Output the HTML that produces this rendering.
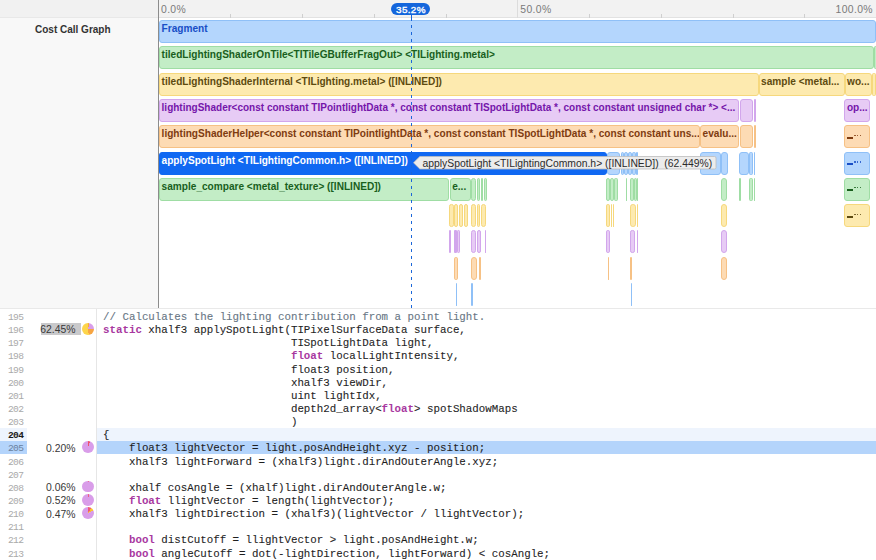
<!DOCTYPE html>
<html><head><meta charset="utf-8">
<style>
*{margin:0;padding:0;box-sizing:border-box}
body{--bl:#8fc0f7;--gr:#9fdda4;--ye:#f6d87d;--pu:#d2a6ec;--or:#f6c185}
html,body{width:876px;height:560px;overflow:hidden;background:#fff;font-family:"Liberation Sans",sans-serif}
.a{position:absolute}
#left{left:0;top:0;width:158px;height:308px;background:#f8f8f8}
#lefttop{left:0;top:0;width:158px;height:17.5px;background:#f1f1f1}
#lefthdr{left:0;top:17px;width:158px;height:1px;background:#e8e8e8}
#vdiv{left:158px;top:0;width:1px;height:308px;background:#8c8c8c}
#hdr{left:159px;top:0;width:717px;height:18px;background:#f2f2f2;border-bottom:1px solid #e2e2e2}
#graph{left:159px;top:18px;width:717px;height:290px;background:#fff}
.title{left:35px;top:23.5px;font-size:10px;font-weight:bold;color:#333}
.pct{top:3.5px;font-size:10.4px;letter-spacing:0.35px;color:#7a7a7a}
.tick{top:14px;width:1px;height:3.5px;background:#cfcfcf}
.b{position:absolute;height:23px;border-radius:3px;border:1px solid;font-size:10.1px;font-weight:bold;line-height:15px;padding-left:1.6px;white-space:nowrap;overflow:hidden}
.bl{background:#b4d6fd;border-color:#8fc0f7;color:#184ec6}
.gr{background:#c3edc6;border-color:#9fdda4;color:#195f1d}
.ye{background:#fdeaaf;border-color:#f6d87d;color:#5d4a10}
.pu{background:#e7cbf5;border-color:#d2a6ec;color:#7516aa}
.or{background:#fddbb4;border-color:#f6c185;color:#7f3c10}
.us{position:absolute;left:2px;width:6px;height:1.8px;background:currentColor}
.dt{position:absolute;width:1.5px;height:1.5px;background:currentColor;opacity:.8}
.sel{background:#1068f2;border-color:#1068f2;color:#fff}
#dash{left:410.7px;top:24.6px;width:1.5px;height:283px;background:repeating-linear-gradient(to bottom,#1a66d9 0,#1a66d9 3.4px,transparent 3.4px,transparent 7px)}
#dashtop{left:410.7px;top:14px;width:1.5px;height:6.6px;background:#1a66d9}
#pill{left:391.3px;top:2.7px;width:39px;height:12.3px;border-radius:7px;background:#1466dc;color:#fff;font-size:9.9px;font-weight:normal;-webkit-text-stroke:0.35px #fff;letter-spacing:0.35px;text-align:center;line-height:13px;text-indent:0.3px}
#tip{left:413px;top:156.3px;width:303.5px;height:13.5px}
#tiptext{left:422.5px;top:156.5px;font-size:10.36px;color:#2b2b2b;line-height:13px;white-space:pre}
#code{left:0;top:308px;width:876px;height:252px;background:#fff;border-top:1px solid #e9e9e9}
#gsep{left:96px;top:309px;width:1px;height:251px;background:#e6e6e6}
.hl204{left:0;width:27px;background:#eef4fd;height:13.15px}
.hl204c{left:97px;width:779px;background:#eef4fd;height:13.15px}
.hl205{left:0;width:27px;background:#b4d4fb;height:13.15px}
.hl205c{left:97px;width:779px;background:#b4d4fb;height:13.15px}
.ln{position:absolute;left:0;width:23.2px;text-align:right;font-family:"Liberation Mono",monospace;font-size:9.6px;letter-spacing:-0.7px;color:#a9a9a9;height:13.15px;line-height:13.15px}
.ln.cur{color:#1a1a1a;font-weight:bold}
.ln.sl{color:#6a819e}
.cl{position:absolute;left:103px;font-family:"Liberation Mono",monospace;font-size:10.8px;color:#1f1f1f;white-space:pre;height:13.15px;line-height:13.15px;-webkit-text-stroke:0.1px currentColor}
.kw{color:#a8389f;font-weight:bold;-webkit-text-stroke:0}
.cm{color:#687684}
.pc{position:absolute;right:800.5px;font-size:10.4px;color:#383838;margin-top:-0.6px;height:13.15px;line-height:13.15px}
.pie{position:absolute;left:82.1px;width:11.8px;height:11.8px;border-radius:50%}
</style></head><body>
<div class="a" id="left"></div>
<div class="a" id="lefttop"></div>
<div class="a" id="lefthdr"></div>
<div class="a title">Cost Call Graph</div>
<div class="a" id="hdr"></div>
<div class="a" id="graph"></div>
<div class="a" id="vdiv"></div>
<div class="a tick" style="left:230.4px"></div><div class="a tick" style="left:302.1px"></div><div class="a tick" style="left:373.9px"></div><div class="a tick" style="left:445.6px"></div><div class="a tick" style="left:589.2px"></div><div class="a tick" style="left:660.9px"></div><div class="a tick" style="left:732.7px"></div><div class="a tick" style="left:804.4px"></div><div class="a" style="left:517px;top:0;width:1px;height:18px;background:#dcdcdc"></div>
<div class="a pct" style="left:161px">0.0%</div>
<div class="a pct" style="left:520.3px">50.0%</div>
<div class="a pct" style="left:835.6px">100.0%</div>
<div class="b bl" style="left:159.0px;top:20.0px;width:717.0px;">Fragment</div>
<div class="b gr" style="left:159.0px;top:46.3px;width:714.5px;">tiledLightingShaderOnTile&lt;TITileGBufferFragOut&gt; &lt;TILighting.metal&gt;</div>
<div class="b gr" style="left:874.3px;top:46.3px;width:2.7px;border-radius:1.4px;"></div>
<div class="b ye" style="left:159.0px;top:72.6px;width:599.5px;">tiledLightingShaderInternal &lt;TILighting.metal&gt; ([INLINED])</div>
<div class="b ye" style="left:758.5px;top:72.6px;width:86.0px;">sample &lt;metal...</div>
<div class="b ye" style="left:844.5px;top:72.6px;width:27.0px;">wo...</div>
<div class="b ye" style="left:872.0px;top:72.6px;width:3.0px;border-radius:1.5px;"></div>
<div class="b pu" style="left:159.0px;top:98.9px;width:580.3px;"><span style="font-size:10px">lightingShader&lt;const constant TIPointlightData *, const constant TISpotLightData *, const constant unsigned char *&gt; &lt;...</span></div>
<div class="b pu" style="left:739.6px;top:98.9px;width:13.9px;"></div>
<div class="b pu" style="left:753.8px;top:98.9px;width:2.2px;border-radius:1px;border:none;background:var(--pu);"></div>
<div class="b pu" style="left:844.3px;top:98.9px;width:25.7px;">op...</div>
<div class="b or" style="left:159.0px;top:125.2px;width:540.6px;">lightingShaderHelper&lt;const constant TIPointlightData *, const constant TISpotLightData *, const constant uns...</div>
<div class="b or" style="left:700.0px;top:125.2px;width:39.3px;">evalu...</div>
<div class="b or" style="left:739.6px;top:125.2px;width:13.9px;"></div>
<div class="b or" style="left:753.8px;top:125.2px;width:2.2px;border-radius:1px;border:none;background:var(--or);"></div>
<div class="b or" style="left:844.3px;top:125.2px;width:25.7px;"><i class="us" style="top:10.80px"></i><i class="dt" style="left:9px;top:8.80px"></i><i class="dt" style="left:11.7px;top:8.80px"></i><i class="dt" style="left:14.4px;top:8.80px"></i></div>
<div class="b sel" style="left:159.0px;top:151.5px;width:448.0px;">applySpotLight &lt;TILightingCommon.h&gt; ([INLINED])</div>
<div class="b bl" style="left:607.0px;top:151.5px;width:13.3px;"></div>
<div class="b bl" style="left:620.5px;top:151.5px;width:3.5px;border-radius:1.8px;"></div>
<div class="b bl" style="left:624.3px;top:151.5px;width:3.7px;border-radius:1.9px;"></div>
<div class="b bl" style="left:628.3px;top:151.5px;width:3.7px;border-radius:1.9px;"></div>
<div class="b bl" style="left:632.3px;top:151.5px;width:3.2px;border-radius:1.6px;"></div>
<div class="b bl" style="left:635.8px;top:151.5px;width:2.2px;border-radius:1px;border:none;background:var(--bl);"></div>
<div class="b bl" style="left:700.2px;top:151.5px;width:20.4px;"></div>
<div class="b bl" style="left:721.0px;top:151.5px;width:6.5px;"></div>
<div class="b bl" style="left:739.2px;top:151.5px;width:9.4px;"></div>
<div class="b bl" style="left:749.0px;top:151.5px;width:3.0px;border-radius:1.5px;"></div>
<div class="b bl" style="left:753.6px;top:151.5px;width:1.9px;border-radius:1px;border:none;background:var(--bl);"></div>
<div class="b bl" style="left:844.3px;top:151.5px;width:25.7px;"><i class="us" style="top:10.50px"></i><i class="dt" style="left:9px;top:8.50px"></i><i class="dt" style="left:11.7px;top:8.50px"></i><i class="dt" style="left:14.4px;top:8.50px"></i></div>
<div class="b gr" style="left:159.0px;top:177.8px;width:290.3px;">sample_compare &lt;metal_texture&gt; ([INLINED])</div>
<div class="b gr" style="left:449.6px;top:177.8px;width:21.2px;">e...</div>
<div class="b gr" style="left:471.2px;top:177.8px;width:5.3px;border-radius:2.7px;"></div>
<div class="b gr" style="left:476.8px;top:177.8px;width:3.7px;border-radius:1.8px;"></div>
<div class="b gr" style="left:480.8px;top:177.8px;width:2.5px;border-radius:1px;border:none;background:var(--gr);"></div>
<div class="b gr" style="left:483.5px;top:177.8px;width:2.8px;border-radius:1.4px;"></div>
<div class="b gr" style="left:606.0px;top:177.8px;width:4.0px;border-radius:2.0px;"></div>
<div class="b gr" style="left:610.3px;top:177.8px;width:3.7px;border-radius:1.9px;"></div>
<div class="b gr" style="left:614.3px;top:177.8px;width:3.0px;border-radius:1.5px;"></div>
<div class="b gr" style="left:625.6px;top:177.8px;width:1.4px;border-radius:1px;border:none;background:var(--gr);"></div>
<div class="b gr" style="left:630.0px;top:177.8px;width:3.5px;border-radius:1.8px;"></div>
<div class="b gr" style="left:633.8px;top:177.8px;width:2.7px;border-radius:1.4px;"></div>
<div class="b gr" style="left:636.8px;top:177.8px;width:1.2px;border-radius:1px;border:none;background:var(--gr);"></div>
<div class="b gr" style="left:720.8px;top:177.8px;width:6.7px;"></div>
<div class="b gr" style="left:739.2px;top:177.8px;width:1.3px;border-radius:1px;border:none;background:var(--gr);"></div>
<div class="b gr" style="left:749.0px;top:177.8px;width:3.0px;border-radius:1.5px;"></div>
<div class="b gr" style="left:753.8px;top:177.8px;width:1.4px;border-radius:1px;border:none;background:var(--gr);"></div>
<div class="b gr" style="left:844.3px;top:177.8px;width:25.7px;"><i class="us" style="top:10.20px"></i><i class="dt" style="left:9px;top:8.20px"></i><i class="dt" style="left:11.7px;top:8.20px"></i><i class="dt" style="left:14.4px;top:8.20px"></i></div>
<div class="b ye" style="left:449.2px;top:204.1px;width:4.6px;border-radius:2.3px;"></div>
<div class="b ye" style="left:454.0px;top:204.1px;width:4.3px;border-radius:2.2px;"></div>
<div class="b ye" style="left:458.6px;top:204.1px;width:4.7px;border-radius:2.3px;"></div>
<div class="b ye" style="left:463.6px;top:204.1px;width:4.2px;border-radius:2.1px;"></div>
<div class="b ye" style="left:471.2px;top:204.1px;width:5.3px;border-radius:2.7px;"></div>
<div class="b ye" style="left:476.8px;top:204.1px;width:3.7px;border-radius:1.8px;"></div>
<div class="b ye" style="left:480.8px;top:204.1px;width:5.5px;border-radius:2.8px;"></div>
<div class="b ye" style="left:606.0px;top:204.1px;width:3.6px;border-radius:1.8px;"></div>
<div class="b ye" style="left:610.5px;top:204.1px;width:1.5px;border-radius:1px;border:none;background:var(--ye);"></div>
<div class="b ye" style="left:612.6px;top:204.1px;width:1.4px;border-radius:1px;border:none;background:var(--ye);"></div>
<div class="b ye" style="left:630.0px;top:204.1px;width:5.5px;border-radius:2.8px;"></div>
<div class="b ye" style="left:636.6px;top:204.1px;width:1.4px;border-radius:1px;border:none;background:var(--ye);"></div>
<div class="b ye" style="left:720.8px;top:204.1px;width:6.7px;"></div>
<div class="b ye" style="left:844.3px;top:204.1px;width:25.7px;"><i class="us" style="top:10.90px"></i><i class="dt" style="left:9px;top:8.90px"></i><i class="dt" style="left:11.7px;top:8.90px"></i><i class="dt" style="left:14.4px;top:8.90px"></i></div>
<div class="b pu" style="left:449.0px;top:230.4px;width:1.3px;border-radius:1px;border:none;background:var(--pu);"></div>
<div class="b pu" style="left:454.0px;top:230.4px;width:2.5px;border-radius:1px;border:none;background:var(--pu);"></div>
<div class="b pu" style="left:456.8px;top:230.4px;width:2.7px;border-radius:1.3px;"></div>
<div class="b pu" style="left:471.2px;top:230.4px;width:5.3px;border-radius:2.7px;"></div>
<div class="b pu" style="left:476.8px;top:230.4px;width:4.5px;border-radius:2.2px;"></div>
<div class="b pu" style="left:484.6px;top:230.4px;width:1.4px;border-radius:1px;border:none;background:var(--pu);"></div>
<div class="b pu" style="left:606.0px;top:230.4px;width:3.6px;border-radius:1.8px;"></div>
<div class="b pu" style="left:630.0px;top:230.4px;width:4.5px;border-radius:2.2px;"></div>
<div class="b pu" style="left:636.6px;top:230.4px;width:1.4px;border-radius:1px;border:none;background:var(--pu);"></div>
<div class="b pu" style="left:720.8px;top:230.4px;width:6.7px;"></div>
<div class="b or" style="left:454.0px;top:256.7px;width:3.3px;border-radius:1.7px;"></div>
<div class="b or" style="left:471.2px;top:256.7px;width:6.0px;"></div>
<div class="b or" style="left:479.0px;top:256.7px;width:1.8px;border-radius:1px;border:none;background:var(--or);"></div>
<div class="b or" style="left:607.6px;top:256.7px;width:1.4px;border-radius:1px;border:none;background:var(--or);"></div>
<div class="b or" style="left:630.4px;top:256.7px;width:1.6px;border-radius:1px;border:none;background:var(--or);"></div>
<div class="b or" style="left:720.8px;top:256.7px;width:6.7px;"></div>
<div class="b bl" style="left:455.8px;top:283.0px;width:1.4px;border-radius:1px;border:none;background:var(--bl);"></div>
<div class="b bl" style="left:471.2px;top:283.0px;width:1.4px;border-radius:1px;border:none;background:var(--bl);"></div>
<div class="b bl" style="left:630.6px;top:283.0px;width:1.4px;border-radius:1px;border:none;background:var(--bl);"></div>
<div class="a" id="dashtop"></div>
<div class="a" id="dash"></div>
<div class="a" id="pill">35.2%</div>
<svg class="a" id="tip" viewBox="0 0 303.5 13.5" width="303.5" height="13.5"><path d="M0.5 6.75 L6.8 0.5 H301.5 Q303 0.5 303 2 V11.5 Q303 13 301.5 13 H6.8 Z" fill="#ececec" stroke="#bdbdbd" stroke-width="0.8"/></svg>
<div class="a" id="tiptext">applySpotLight &lt;TILightingCommon.h&gt; ([INLINED])  (62.449%)</div>
<div class="a" id="code"></div>
<div class="a hl204" style="top:427.65px"></div>
<div class="a hl204c" style="top:427.65px"></div>
<div class="a hl205" style="top:440.8px"></div>
<div class="a hl205c" style="top:440.8px"></div>
<div class="a" id="gsep"></div>
<div class="a" style="left:41.2px;top:322.6px;width:40px;height:12.7px;background:#c9c9cb"></div>
<div class="ln" style="top:310.90px">195</div>
<div class="cl" style="top:310.90px"><span class="cm">// Calculates the lighting contribution from a point light.</span></div>
<div class="ln" style="top:324.05px">196</div>
<div class="cl" style="top:324.05px"><span class="kw">static</span> xhalf3 applySpotLight(TIPixelSurfaceData surface,</div>
<div class="ln" style="top:337.20px">197</div>
<div class="cl" style="top:337.20px">                             TISpotLightData light,</div>
<div class="ln" style="top:350.35px">198</div>
<div class="cl" style="top:350.35px">                             <span class="kw">float</span> localLightIntensity,</div>
<div class="ln" style="top:363.50px">199</div>
<div class="cl" style="top:363.50px">                             float3 position,</div>
<div class="ln" style="top:376.65px">200</div>
<div class="cl" style="top:376.65px">                             xhalf3 viewDir,</div>
<div class="ln" style="top:389.80px">201</div>
<div class="cl" style="top:389.80px">                             uint lightIdx,</div>
<div class="ln" style="top:402.95px">202</div>
<div class="cl" style="top:402.95px">                             depth2d_array&lt;<span class="kw">float</span>&gt; spotShadowMaps</div>
<div class="ln" style="top:416.10px">203</div>
<div class="cl" style="top:416.10px">                             )</div>
<div class="ln cur" style="top:429.25px">204</div>
<div class="cl" style="top:429.25px">{</div>
<div class="ln sl" style="top:442.40px">205</div>
<div class="cl" style="top:442.40px">    float3 lightVector = light.posAndHeight.xyz - position;</div>
<div class="ln" style="top:455.55px">206</div>
<div class="cl" style="top:455.55px">    xhalf3 lightForward = (xhalf3)light.dirAndOuterAngle.xyz;</div>
<div class="ln" style="top:468.70px">207</div>
<div class="cl" style="top:468.70px"></div>
<div class="ln" style="top:481.85px">208</div>
<div class="cl" style="top:481.85px">    xhalf cosAngle = (xhalf)light.dirAndOuterAngle.w;</div>
<div class="ln" style="top:495.00px">209</div>
<div class="cl" style="top:495.00px">    <span class="kw">float</span> llightVector = length(lightVector);</div>
<div class="ln" style="top:508.15px">210</div>
<div class="cl" style="top:508.15px">    xhalf3 lightDirection = (xhalf3)(lightVector / llightVector);</div>
<div class="ln" style="top:521.30px">211</div>
<div class="cl" style="top:521.30px"></div>
<div class="ln" style="top:534.45px">212</div>
<div class="cl" style="top:534.45px">    <span class="kw">bool</span> distCutoff = llightVector &gt; light.posAndHeight.w;</div>
<div class="ln" style="top:547.60px">213</div>
<div class="cl" style="top:547.60px">    <span class="kw">bool</span> angleCutoff = dot(-lightDirection, lightForward) &lt; cosAngle;</div>
<div class="pc" style="top:324.05px">62.45%</div>
<div class="pc" style="top:442.40px">0.20%</div>
<div class="pc" style="top:481.85px">0.06%</div>
<div class="pc" style="top:495.00px">0.52%</div>
<div class="pc" style="top:508.15px">0.47%</div>
<div class="pie" style="top:322.85px;background:conic-gradient(#f7a542 0 15deg,#d99de9 15deg 88deg,#f7a542 88deg 172deg,#fdd54b 172deg 360deg)"></div>
<div class="pie" style="top:441.20px;background:conic-gradient(#f0506e 0 22deg,#d99de9 22deg 360deg)"></div>
<div class="pie" style="top:480.65px;background:conic-gradient(#ee6f95 0 7deg,#d99de9 7deg 360deg)"></div>
<div class="pie" style="top:493.80px;background:conic-gradient(#ee5f86 0 11deg,#d99de9 11deg 360deg)"></div>
<div class="pie" style="top:506.95px;background:conic-gradient(#f0587a 0 34deg,#f9c531 34deg 64deg,#d99de9 64deg 360deg)"></div>
</body></html>
